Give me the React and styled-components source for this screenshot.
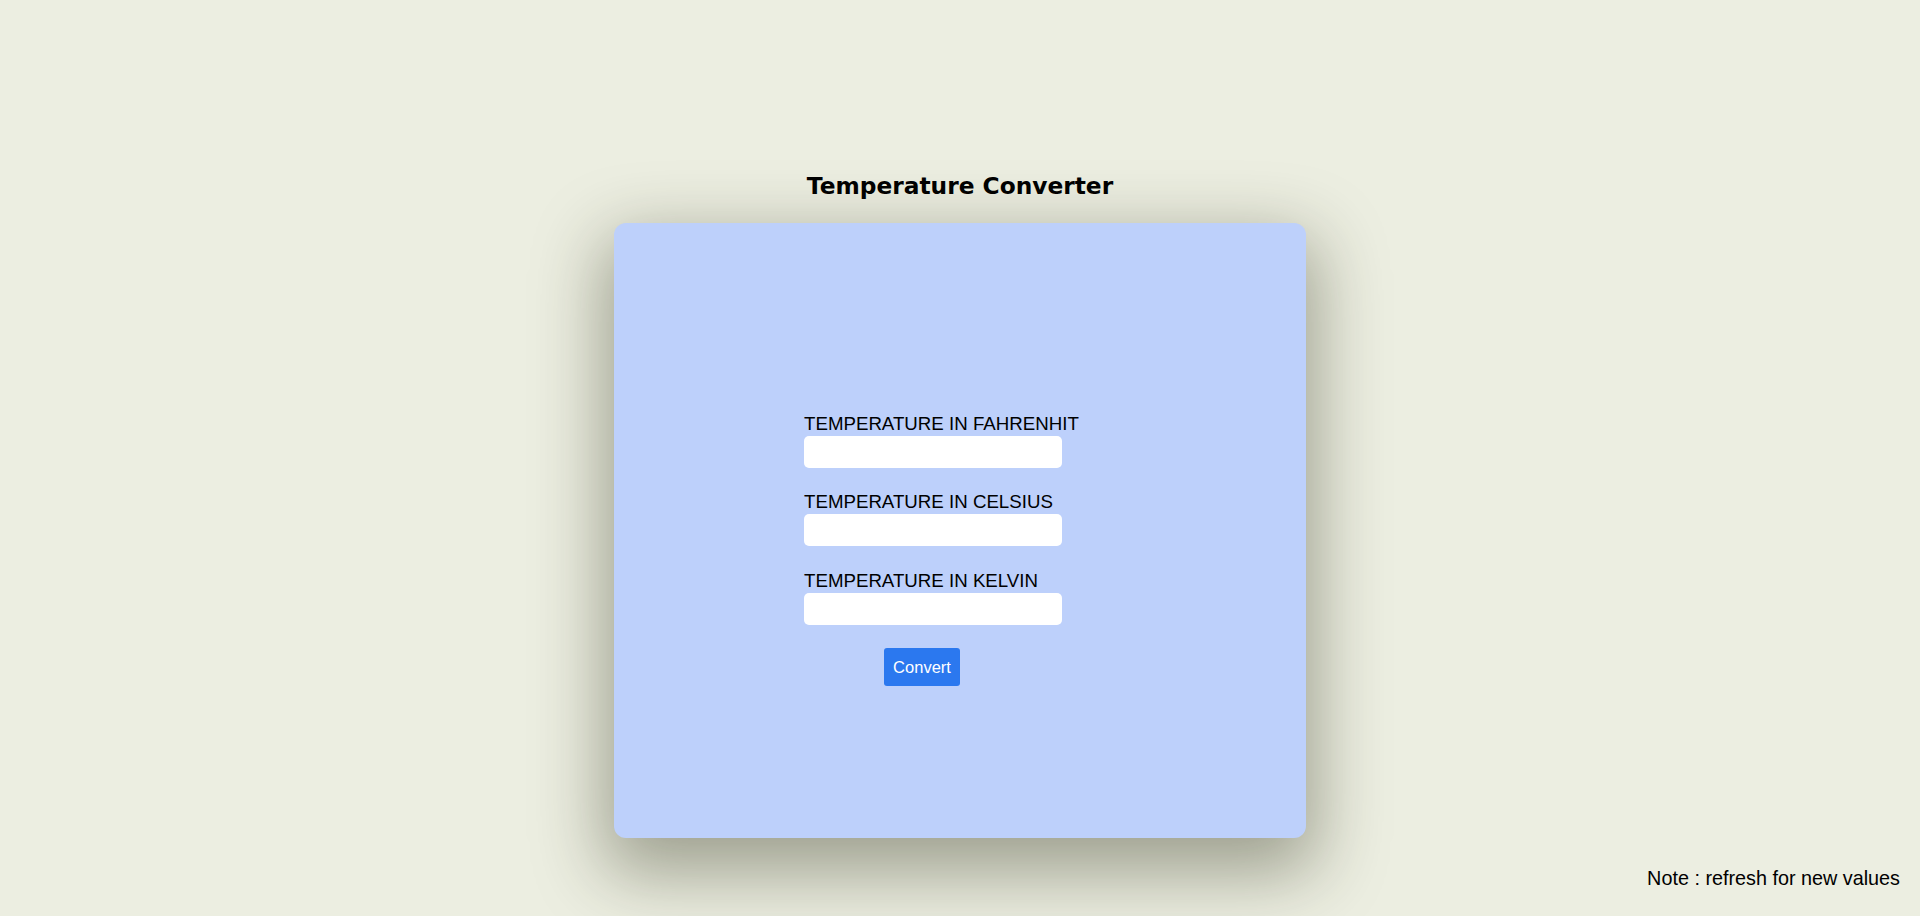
import React from "react";
import styled, { createGlobalStyle } from "styled-components";

const GlobalStyle = createGlobalStyle`
  body {
    margin: 0;
    background-color: #eceee1;
    font-family: "Liberation Sans", Arial, sans-serif;
    color: #000;
  }
`
const Page = styled.div`
  min-height: 100vh;
  box-sizing: border-box;
  display: flex;
  flex-direction: column;
  align-items: center;
  padding-top: 171px;
`
const Title = styled.h2`
  margin: 0 0 22px 0;
  font-family: "DejaVu Sans", Verdana, sans-serif;
  font-weight: 700;
  font-size: 23.3px;
  line-height: 30px;
`
const Card = styled.div`
  width: 692px;
  height: 615px;
  box-sizing: border-box;
  background-color: #bdd0fb;
  border-radius: 12px;
  box-shadow: 0 25px 70px 10px rgba(40, 42, 20, 0.4);
  display: flex;
  flex-direction: column;
  align-items: flex-start;
  padding: 190px 0 0 190px;
`
const Field = styled.div`
  display: flex;
  flex-direction: column;
  margin-bottom: ${props => props.gap}px;
`
const Label = styled.label`
  font-size: 18.7px;
  line-height: 21px;
  margin-bottom: 2px;
`
const Input = styled.input`
  width: 258px;
  height: 32px;
  box-sizing: border-box;
  border: none;
  border-radius: 5px;
  background-color: #fff;
  outline: none;
  padding: 0 8px;
  font-size: 16px;
`
const ConvertButton = styled.button`
  margin-left: 80px;
  width: 76px;
  height: 38px;
  border: none;
  border-radius: 3px;
  background-color: #2b78ef;
  color: #fff;
  font-family: "Liberation Sans", Arial, sans-serif;
  font-size: 16.5px;
  padding: 0;
  cursor: pointer;
`
const Footer = styled.div`
  margin-top: auto;
  align-self: stretch;
  display: flex;
  justify-content: flex-end;
  padding: 0 20px 26px 0;
`
const Note = styled.p`
  margin: 0;
  font-size: 19.8px;
  line-height: 23px;
`

export default function App() {
  return (
    <>
      <GlobalStyle />
      <Page>
        <Title>Temperature Converter</Title>
        <Card>
          <Field gap={23}>
            <Label>TEMPERATURE IN FAHRENHIT</Label>
            <Input type="text" />
          </Field>
          <Field gap={24}>
            <Label>TEMPERATURE IN CELSIUS</Label>
            <Input type="text" />
          </Field>
          <Field gap={23}>
            <Label>TEMPERATURE IN KELVIN</Label>
            <Input type="text" />
          </Field>
          <ConvertButton>Convert</ConvertButton>
        </Card>
        <Footer>
          <Note>Note : refresh for new values</Note>
        </Footer>
      </Page>
    </>
  );
}
